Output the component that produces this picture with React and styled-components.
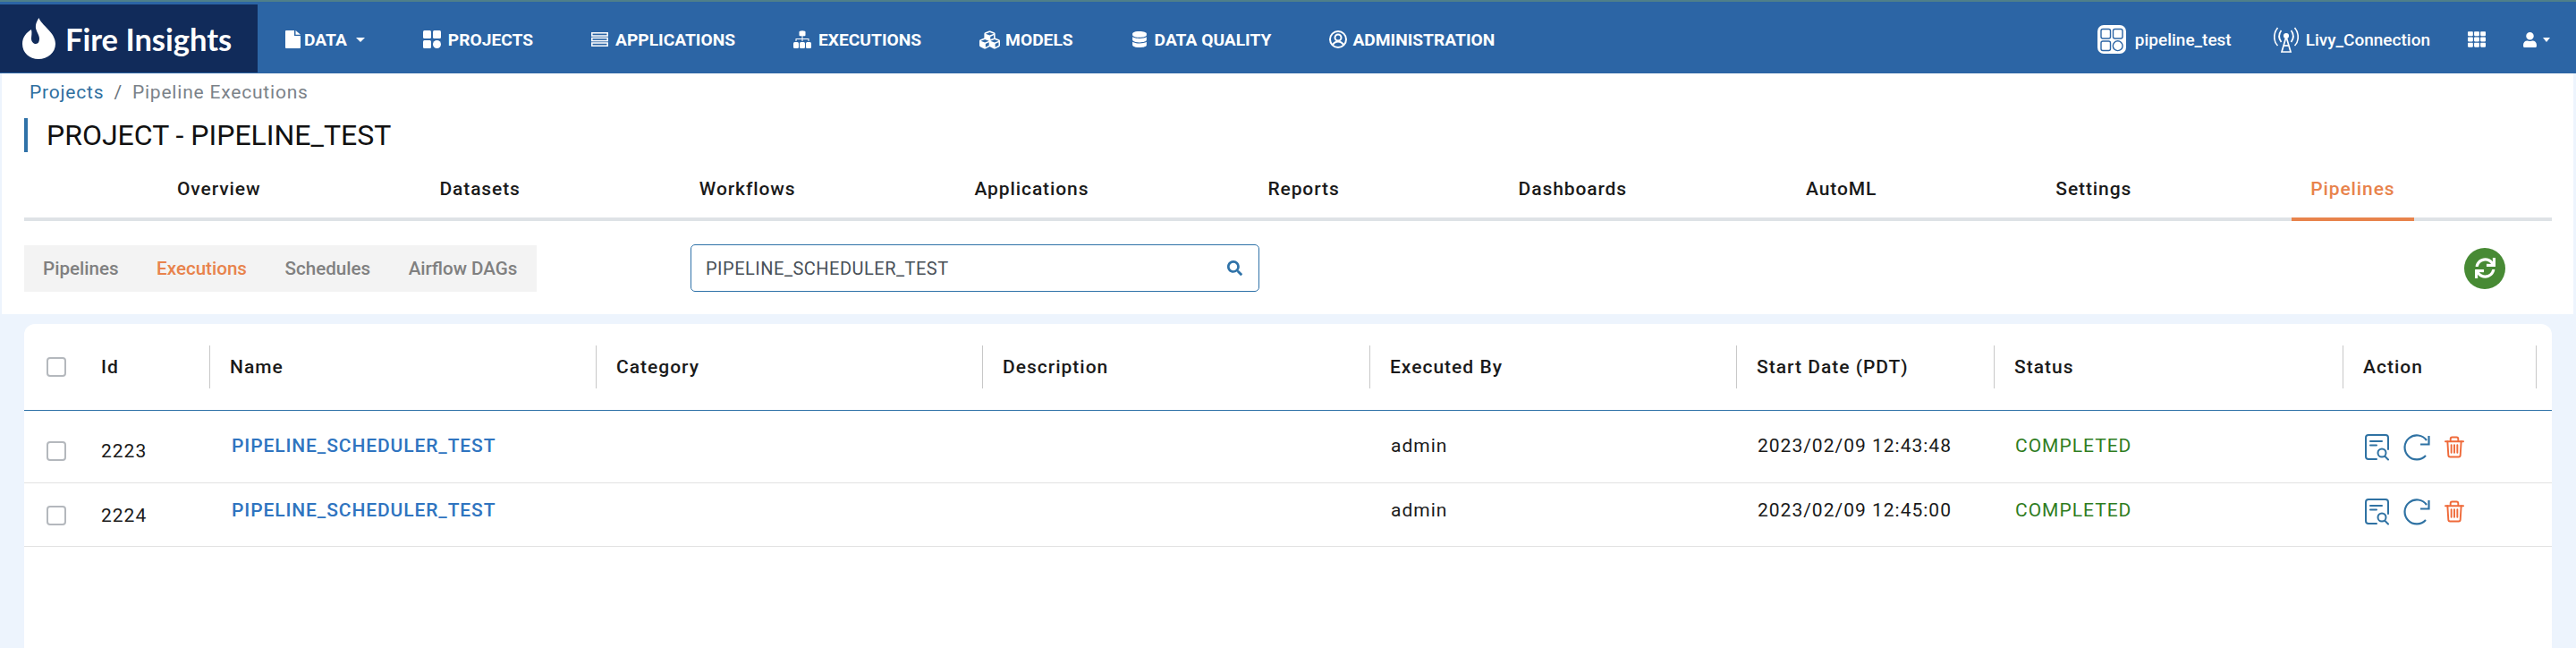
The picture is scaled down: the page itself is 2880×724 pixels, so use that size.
import React from 'react'
import styled, { createGlobalStyle } from 'styled-components'
import { FaCubes, FaDatabase, FaTh, FaUser, FaSearch, FaSync } from 'react-icons/fa'

const App = () => {
  return (
    <>
      <GlobalStyle />
      <Page>
        <Navbar>
          <Logo>
            <FlameIcon />
            <LogoText>Fire Insights</LogoText>
          </Logo>
          <NavList>
            <NavItem $gap={4}><FileIcon /> DATA <Caret /></NavItem>
            <NavItem><ProjectsIcon /> PROJECTS</NavItem>
            <NavItem><ServerIcon /> APPLICATIONS</NavItem>
            <NavItem><SitemapIcon /> EXECUTIONS</NavItem>
            <NavItem $gap={6}><FaCubes size={23} /> MODELS</NavItem>
            <NavItem><FaDatabase size={18} /> DATA QUALITY</NavItem>
            <NavItem $gap={6}><AdminIcon /> ADMINISTRATION</NavItem>
          </NavList>
          <NavRight>
            <NavPill $gap={10}><ProjectBadge /> pipeline_test</NavPill>
            <NavPill $gap={8}><AntennaIcon /> Livy_Connection</NavPill>
            <NavIconBox $left={42}><FaTh size={20} /></NavIconBox>
            <NavIconBox $left={41}><FaUser size={17} /><Caret $small /></NavIconBox>
          </NavRight>
        </Navbar>

        <TopSection>
          <Breadcrumb>
            <CrumbLink>Projects</CrumbLink>
            <CrumbSep>/</CrumbSep>
            <CrumbCurrent>Pipeline Executions</CrumbCurrent>
          </Breadcrumb>
          <Title>PROJECT - PIPELINE_TEST</Title>
          <Tabs>
            {tabs.map(t => (
              <Tab key={t} $active={t === 'Pipelines'}>{t}</Tab>
            ))}
          </Tabs>
          <SubBar>
            <SubTabs>
              {subTabs.map(t => (
                <SubTab key={t} $active={t === 'Executions'}>{t}</SubTab>
              ))}
            </SubTabs>
            <SearchBox>
              <SearchInput defaultValue="PIPELINE_SCHEDULER_TEST" />
              <SearchGlyph><FaSearch size={17} /></SearchGlyph>
            </SearchBox>
            <RefreshButton><FaSync size={23} /></RefreshButton>
          </SubBar>
        </TopSection>

        <Card>
          <HeadRow>
            <HeadCell $first>
              <Check type="checkbox" />
              <span>Id</span>
            </HeadCell>
            {headers.map(h => <HeadCell key={h}>{h}</HeadCell>)}
          </HeadRow>
          <Body>
            {rows.map(r => (
              <Row key={r.id}>
                <FirstCell>
                  <Check type="checkbox" />
                  <span>{r.id}</span>
                </FirstCell>
                <NameCell>PIPELINE_SCHEDULER_TEST</NameCell>
                <Cell />
                <Cell />
                <RaisedCell>admin</RaisedCell>
                <RaisedCell>{r.date}</RaisedCell>
                <StatusCell>COMPLETED</StatusCell>
                <ActionCell>
                  <ViewIcon />
                  <RerunIcon />
                  <TrashIcon />
                </ActionCell>
              </Row>
            ))}
          </Body>
        </Card>
      </Page>
    </>
  )
}

export default App

const tabs = ['Overview', 'Datasets', 'Workflows', 'Applications', 'Reports', 'Dashboards', 'AutoML', 'Settings', 'Pipelines']
const subTabs = ['Pipelines', 'Executions', 'Schedules', 'Airflow DAGs']
const headers = ['Name', 'Category', 'Description', 'Executed By', 'Start Date (PDT)', 'Status', 'Action']
const rows = [
  { id: 2223, date: '2023/02/09 12:43:48' },
  { id: 2224, date: '2023/02/09 12:45:00' },
]

// ================= icons ===================

const FlameIcon = () => (
  <svg width="50" height="58" viewBox="0 0 50 58" fill="#fff">
    <path d="M23.500 6C26 14 42 22 42 35C42 45 33 52 23 52C13 52 5 45 5 35C5 27 10 22 15 19C16 23 15 26 15 29C15 33 18 35 20 35C23 35 24 32 24 29C24 24 19 20 20 14C20.500 11 22 8 23.500 6Z" />
  </svg>
)

const FileIcon = () => (
  <svg width="17" height="20" viewBox="0 0 17 20" fill="#fff">
    <path d="M1 0h9v6h7v13a1 1 0 0 1-1 1H1a1 1 0 0 1-1-1V1a1 1 0 0 1 1-1z" />
    <path d="M11.500 0L17 4.800h-5.500z" />
  </svg>
)

const ProjectsIcon = () => (
  <svg width="20" height="20" viewBox="0 0 20 20" fill="#fff">
    <rect x="0" y="0" width="9" height="9" rx="1.5" />
    <rect x="11" y="0" width="9" height="9" rx="1.5" />
    <rect x="0" y="11" width="9" height="9" rx="1.5" />
    <circle cx="15.5" cy="15.5" r="4.5" />
  </svg>
)

const ServerIcon = () => (
  <svg width="19" height="16" viewBox="0 0 19 16" fill="none" stroke="#fff" strokeWidth="1.5">
    <rect x="0.800" y="0.800" width="17.400" height="3.200" />
    <rect x="0.800" y="6.400" width="17.400" height="3.200" />
    <rect x="0.800" y="12" width="17.400" height="3.200" />
  </svg>
)

const SitemapIcon = () => (
  <svg width="20" height="20" viewBox="0 0 20 20" fill="#fff">
    <ellipse cx="10" cy="1.800" rx="3.500" ry="1.500" />
    <rect x="6.500" y="1.800" width="7" height="4.500" rx="1" />
    <path d="M9.500 6h1v3h7v3h-1v-2h-6v2h-1v-2h-6v2h-1V9h7z" />
    <rect x="0" y="13" width="6" height="7" rx="1.500" />
    <rect x="7" y="13" width="6" height="7" rx="1.500" />
    <rect x="14" y="13" width="6" height="7" rx="1.500" />
  </svg>
)

const AdminIcon = () => (
  <svg width="20" height="20" viewBox="0 0 20 20" fill="none" stroke="#fff" strokeWidth="2">
    <circle cx="10" cy="10" r="9" />
    <circle cx="10" cy="8" r="3.500" />
    <path d="M4 16c1.500-2.500 3.500-3.500 6-3.500s4.500 1 6 3.500" />
  </svg>
)

const ProjectBadge = () => (
  <svg width="32" height="32" viewBox="0 0 32 32">
    <rect width="32" height="32" rx="7" fill="#fff" />
    <g fill="none" stroke="#2c65a5" strokeWidth="1.4">
      <rect x="4" y="4.500" width="10.500" height="10.500" rx="2" />
      <rect x="17.500" y="4.500" width="10.500" height="10.500" rx="2" />
      <rect x="4" y="18" width="10.500" height="10.500" rx="2" />
      <circle cx="22.700" cy="23.200" r="5.400" />
    </g>
  </svg>
)

const AntennaIcon = () => (
  <svg width="28" height="29" viewBox="0 0 28 29" fill="none" stroke="#fff" strokeWidth="1.7">
    <circle cx="14" cy="10" r="2.200" fill="#fff" />
    <path d="M14 11l-5 17h10z" />
    <path d="M11.500 21h5" />
    <path d="M8.500 4c-3 4-3 9 0 13M19.500 4c3 4 3 9 0 13" />
    <path d="M4.500 1c-5 6-5 15 0 20M23.500 1c5 6 5 15 0 20" />
  </svg>
)

const ViewIcon = () => (
  <svg width="27" height="30" viewBox="0 0 27 30" fill="none" stroke="#2f72a3" strokeWidth="2" strokeLinecap="round">
    <path d="M13 28H4a3 3 0 0 1-3-3V4a3 3 0 0 1 3-3h19a3 3 0 0 1 3 3v13" />
    <path d="M6 8h13M6 12.500h7" />
    <circle cx="19" cy="21" r="4.500" />
    <path d="M22.500 25l3.500 3.500" />
  </svg>
)

const RerunIcon = () => (
  <svg width="30" height="30" viewBox="0 0 30 30" fill="none" stroke="#2f72a3" strokeWidth="2.200">
    <path d="M25 24a13.500 13.500 0 1 1 1-17" />
    <path d="M28.500 2v9.500H19" strokeLinejoin="miter" />
  </svg>
)

const TrashIcon = () => (
  <svg width="22" height="25" viewBox="0 0 23 25" fill="none" stroke="#ef6a3a" strokeWidth="2" strokeLinecap="round">
    <path d="M1 6h21" />
    <path d="M7 5V3a2 2 0 0 1 2-2h5a2 2 0 0 1 2 2v2" />
    <path d="M3.500 6l1 16a2 2 0 0 0 2 2h10a2 2 0 0 0 2-2l1-16" />
    <path d="M8 10v9M11.500 10v9M15 10v9" />
  </svg>
)

// ================= styled ===================

const GlobalStyle = createGlobalStyle`
  html, body {
    margin: 0;
    height: 100%;
    overflow: hidden;
    background: #edf4fd;
    font-family: Roboto, "Liberation Sans", sans-serif;
  }
  #root {
    height: 100%;
  }
  * {
    box-sizing: border-box;
  }
`

const Page = styled.div`
  height: 100vh;
  display: flex;
  flex-direction: column;
`

const Navbar = styled.header`
  height: 82px;
  flex: none;
  display: flex;
  align-items: center;
  background: #2c65a5;
  border-top: 2px solid #4f7f8a;
  color: #fff;
`

const Logo = styled.div`
  width: 288px;
  height: 76px;
  margin-top: 2px;
  flex: none;
  background: #112b5a;
  display: flex;
  align-items: center;
  gap: 3px;
  padding-left: 20px;
`

const LogoText = styled.span`
  font-family: Lato, sans-serif;
  font-weight: 700;
  font-size: 34.5px;
  color: #fff;
  white-space: nowrap;
`

const NavList = styled.nav`
  display: flex;
  align-items: center;
  gap: 65px;
  padding: 4px 0 0 31px;
`

const NavItem = styled.a`
  display: flex;
  align-items: center;
  gap: ${props => props.$gap || 8}px;
  font-size: 19.2px;
  font-weight: 700;
  color: #fff;
  white-space: nowrap;
`

const Caret = styled.span`
  width: 0;
  height: 0;
  margin-left: 6px;
  border-left: ${props => props.$small ? 4 : 5}px solid transparent;
  border-right: ${props => props.$small ? 4 : 5}px solid transparent;
  border-top: 5px solid #fff;
`

const NavRight = styled.div`
  margin-left: auto;
  padding: 4px 29px 0 0;
  display: flex;
  align-items: center;
`

const NavPill = styled.a`
  display: flex;
  align-items: center;
  gap: ${props => props.$gap}px;
  margin-right: 47px;
  font-size: 19px;
  font-weight: 500;
  color: #fff;
  white-space: nowrap;
  &:nth-child(2) {
    margin-right: 0;
  }
`

const NavIconBox = styled.span`
  display: flex;
  align-items: center;
  margin-left: ${props => props.$left}px;
`

const TopSection = styled.section`
  flex: none;
  height: 269px;
  margin: 0 3px 0 2px;
  padding: 9px 24px 0 25px;
  background: #fff;
`

const Breadcrumb = styled.div`
  display: flex;
  gap: 11px;
  padding-left: 6px;
  font-size: 21px;
  line-height: 24px;
  letter-spacing: 0.8px;
`

const CrumbLink = styled.a`
  color: #2f6f9f;
`

const CrumbSep = styled.span`
  color: #6c757d;
`

const CrumbCurrent = styled.span`
  color: #7b8289;
`

const Title = styled.h1`
  margin: 17px 0 0;
  height: 38px;
  border-left: 4px solid #2f72a8;
  padding-left: 21px;
  font-size: 32px;
  line-height: 38px;
  font-weight: 400;
  color: #111;
`

const Tabs = styled.div`
  display: flex;
  gap: 158px;
  height: 77px;
  padding-left: 150px;
  border-bottom: 4px solid #dee2e6;
`

const Tab = styled.a`
  margin-bottom: -4px;
  padding: 29px 21px 0;
  font-size: 21px;
  font-weight: 500;
  letter-spacing: 0.9px;
  color: ${props => props.$active ? '#e8834c' : '#1a1a1a'};
  border-bottom: 4px solid ${props => props.$active ? '#e8834c' : 'transparent'};
  white-space: nowrap;
`

const SubBar = styled.div`
  display: flex;
  align-items: center;
  margin-top: 26px;
  padding-right: 52px;
`

const SubTabs = styled.div`
  width: 573px;
  height: 52px;
  flex: none;
  display: flex;
  align-items: center;
  gap: 42.5px;
  padding-left: 21px;
  background: #f3f3f3;
`

const SubTab = styled.a`
  font-size: 20.6px;
  font-weight: 500;
  color: ${props => props.$active ? '#e8834c' : '#808080'};
  white-space: nowrap;
`

const SearchBox = styled.div`
  position: relative;
  width: 636px;
  height: 53px;
  margin-left: 172px;
  flex: none;
`

const SearchInput = styled.input`
  width: 100%;
  height: 100%;
  padding: 0 50px 0 16px;
  border: 1.5px solid #2f72a8;
  border-radius: 5px;
  outline: none;
  font-family: Roboto, sans-serif;
  font-size: 20px;
  letter-spacing: 0.5px;
  color: #495057;
`

const SearchGlyph = styled.span`
  position: absolute;
  right: 19px;
  top: 18px;
  color: #2f72a8;
`

const RefreshButton = styled.span`
  width: 46px;
  height: 46px;
  margin-left: auto;
  flex: none;
  display: flex;
  align-items: center;
  justify-content: center;
  border-radius: 50%;
  background: #478a34;
  color: #fff;
`

const Card = styled.section`
  flex: 1;
  margin: 11px 27px 0;
  background: #fff;
  border-radius: 12px 12px 0 0;
`

const columns = '208px 432px 432px 433px 410px 288px 390px 216px'

const HeadRow = styled.div`
  display: grid;
  grid-template-columns: ${columns};
  height: 97px;
  padding-top: 24px;
  border-bottom: 1px solid #2f72a8;
`

const HeadCell = styled.div`
  height: 48px;
  display: flex;
  align-items: center;
  gap: 39px;
  padding-left: ${props => props.$first ? 25 : 22}px;
  border-right: 1px solid #c8c8c8;
  font-size: 21px;
  font-weight: 500;
  letter-spacing: 1px;
  color: #1a1a1a;
`

const Body = styled.div`
  padding-top: 10px;
`

const Row = styled.div`
  display: grid;
  grid-template-columns: ${columns};
  height: 71px;
  border-bottom: 1px solid #e2e2e2;
  align-items: center;
  &:last-child {
    padding-top: 2px;
  }
`

const Cell = styled.div`
  padding-left: 23px;
  font-size: 21px;
  letter-spacing: 1px;
  color: #1a1a1a;
`

const FirstCell = styled(Cell)`
  display: flex;
  align-items: center;
  gap: 39px;
  padding-left: 25px;
`

const RaisedCell = styled(Cell)`
  padding-bottom: 12px;
`

const NameCell = styled(RaisedCell)`
  padding-left: 24px;
  font-weight: 500;
  letter-spacing: 0.9px;
  color: #2f74c0;
`

const StatusCell = styled(RaisedCell)`
  color: #2f7d1f;
`

const ActionCell = styled(RaisedCell)`
  display: flex;
  align-items: center;
  gap: 16px;
  padding-left: 24px;
  padding-bottom: 9px;
`

const Check = styled.input`
  appearance: none;
  width: 22px;
  height: 22px;
  margin: 0;
  flex: none;
  background: #fff;
  border: 2px solid #b4b8bd;
  border-radius: 4px;
`
